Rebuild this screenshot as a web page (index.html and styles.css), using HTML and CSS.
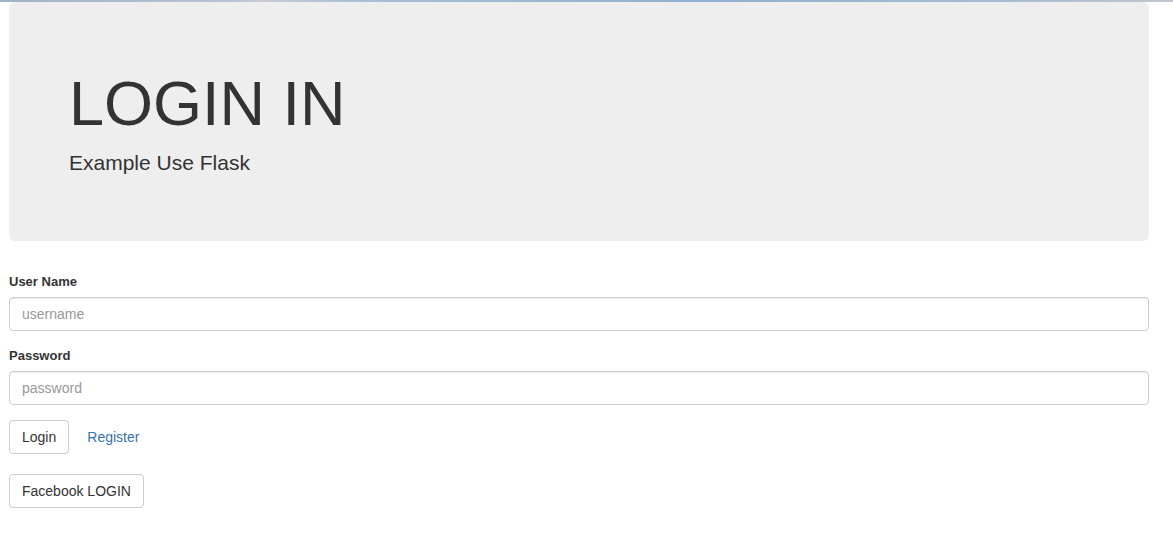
FILE: index.html
```html
<!DOCTYPE html>
<html>
<head>
<meta charset="utf-8">
<link rel="stylesheet" href="styles.css">
</head>
<body>
<div class="topline"></div>
<div class="container">
  <div class="jumbotron">
    <h1>LOGIN IN</h1>
    <p>Example Use Flask</p>
  </div>
  <form class="form">
    <div class="group">
      <label>User Name</label>
      <input class="field" type="text" placeholder="username">
    </div>
    <div class="group">
      <label>Password</label>
      <input class="field" type="password" placeholder="password">
    </div>
    <div class="actions">
      <button type="button" class="btn">Login</button>
      <a class="link" href="#">Register</a>
    </div>
    <div class="actions fb">
      <button type="button" class="btn">Facebook LOGIN</button>
    </div>
  </form>
</div>
</body>
</html>
```
FILE: styles.css
```css
* { box-sizing: border-box; }
html, body { margin: 0; padding: 0; background: #fff; }
body {
  font-family: "Liberation Sans", Arial, sans-serif;
  font-size: 14px;
  color: #333;
}
.topline {
  height: 2px;
  background: linear-gradient(90deg, #9fb3c8 0%, #b7c3d2 20%, #c9ccd2 22%, #a9bfd6 30%, #8fb0cf 60%, #a6bdd3 85%, #c0c4c9 100%);
}
.container {
  width: 1140px;
  margin-left: 9px;
}
.jumbotron {
  background: #eeeeee;
  border-radius: 6px;
  height: 239px;
  padding: 66px 60px 0;
  margin-bottom: 31px;
}
.jumbotron h1 {
  margin: 0;
  font-size: 63px;
  font-weight: 400;
  line-height: 70px;
  color: #333;
}
.jumbotron p {
  margin: 10px 0 0;
  font-size: 21px;
  line-height: 30px;
  font-weight: 300;
}
.group { margin-bottom: 15px; }
.group label {
  display: block;
  font-weight: 700;
  font-size: 13px;
  line-height: 20px;
  margin-bottom: 5px;
  color: #333;
}
.field {
  display: block;
  width: 100%;
  height: 34px;
  padding: 6px 12px;
  font-family: inherit;
  font-size: 14px;
  color: #555;
  border: 1px solid #ccc;
  border-radius: 4px;
  background: #fff;
  box-shadow: inset 0 1px 1px rgba(0,0,0,.075);
  outline: none;
}
.field::placeholder { color: #999; }
.actions {
  display: flex;
  align-items: center;
  gap: 18px;
}
.actions.fb { margin-top: 20px; }
.btn {
  height: 34px;
  padding: 6px 12px;
  font-family: inherit;
  font-size: 14px;
  color: #333;
  background: #fff;
  border: 1px solid #ccc;
  border-radius: 4px;
}
.link {
  color: #3a73a9;
  text-decoration: none;
  font-size: 14px;
}
```
